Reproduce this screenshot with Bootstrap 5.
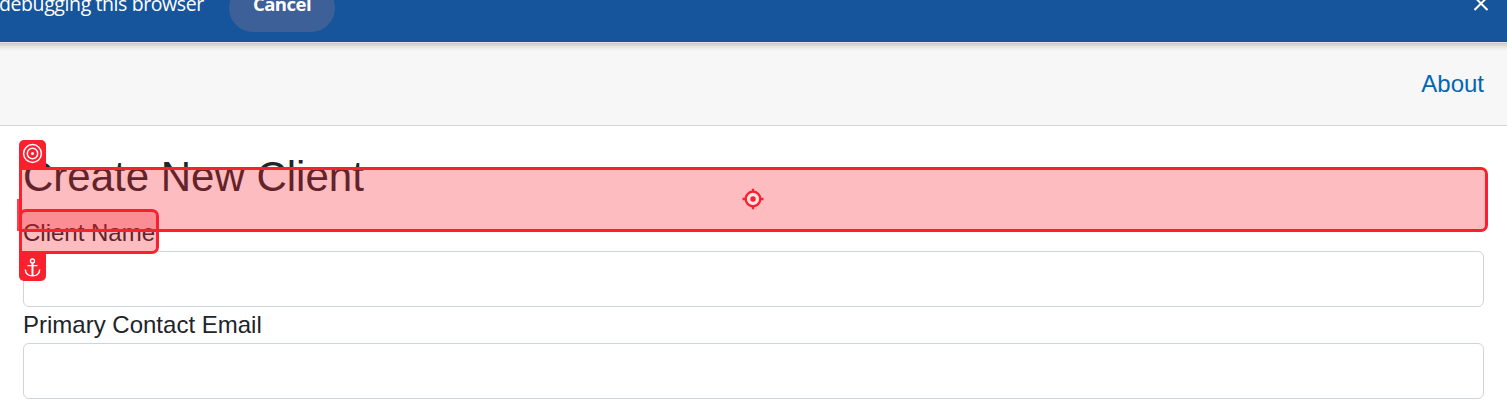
<!DOCTYPE html>
<html lang="en">
<head>
<meta charset="utf-8">
<meta name="viewport" content="width=device-width, initial-scale=1">
<title>Create New Client</title>
<link href="https://cdn.jsdelivr.net/npm/bootstrap@5.3.0/dist/css/bootstrap.min.css" rel="stylesheet">
<style>
html { font-size: 24px; }
body { font-family: "Liberation Sans", Arial, sans-serif; height: 401px; }
.infobar { height: 42px; background: #16559b; font: 19.5px/26px "Open Sans", "Noto Sans", sans-serif; }
.infobar-text { width: 230px; margin: -9px 0 0 -1px; letter-spacing: -.4px; white-space: nowrap; }
.infobar .btn-cancel { width: 106px; height: 48px; margin-top: -16px; padding: 0 0 8px; border: 0; border-radius: 24px; background: #3d6098; color: #fff; font: 700 18.5px/26px "Open Sans", sans-serif; letter-spacing: -.5px; }
.btn-dismiss { width: 14px; height: 14px; margin: -3px 19px 0 auto; }
.site-nav { height: 84px; background: linear-gradient(#e2e2e4 0 1px, #c5c8c9 1px, #d6d8d8 3px, #ececec 6px, #f7f7f7 9px); border-bottom: 1px solid #d2d4d6; padding: 0 23px; }
.site-nav .nav-link { color: #0366b3; line-height: 36px; }
.form-area { padding: 25.6px 23px 0; }
.form-area h3 { font-size: 42px; line-height: 50.4px; font-weight: 400; margin-bottom: 13px; }
.form-area label { display: block; line-height: 36px; width: max-content; }
.form-area .form-control { height: 56px; border-color: #ced4da; border-radius: 6px; }
/* selection overlays drawn above the form */
.overlay-box { border: 3px solid #fa202e; background: rgba(249,33,46,.3); }
.target-box { left: 19px; top: 167px; right: 19px; height: 65px; border-radius: 0 7px 7px 0; padding: 0 1px 1px 0; }
.anchor-box { left: 19px; top: 209px; width: 140px; height: 45px; border-radius: 7px 7px 7px 0; }
.overlay-tag { left: 19px; width: 27px; height: 28px; background: #fa202e; }
.overlay-tag svg { display: block; }
.link-line { left: 17px; top: 199px; width: 2px; height: 32px; background: #fa202e; opacity: .85; }
</style>
</head>
<body class="position-relative overflow-hidden bg-white">
<div class="infobar d-flex align-items-start text-white overflow-hidden">
  <div class="infobar-text">debugging this browser</div>
  <button class="btn btn-cancel" type="button">Cancel</button>
  <svg class="btn-dismiss" viewBox="0 0 14 14" stroke="#fff" stroke-width="2" fill="none"><path d="M.5 0L13.5 13M13.5 0L.5 13"/></svg>
</div>
<nav class="site-nav d-flex align-items-center justify-content-end"><a class="nav-link" href="#">About</a></nav>
<main class="form-area">
  <h3>Create New Client</h3>
  <label for="name">Client Name</label>
  <input class="form-control" id="name">
  <label for="email">Primary Contact Email</label>
  <input class="form-control" id="email">
</main>
<div class="overlay-box target-box position-absolute d-flex align-items-center justify-content-center">
  <svg width="22" height="22" viewBox="0 0 22 22" fill="none" stroke="#fa202e" stroke-width="2.3"><circle cx="11" cy="11" r="7.3" fill="#fee3e5"/><path d="M11 .8v3.5M11 17.7v3.5M.5 11h3.5M18 11h3.5"/><circle cx="11" cy="11" r="2.7" fill="#fa202e" stroke="none"/></svg>
</div>
<div class="overlay-box anchor-box position-absolute"></div>
<div class="link-line position-absolute"></div>
<div class="overlay-tag position-absolute" style="top:140px;border-radius:5px 5px 0 0">
  <svg width="27" height="28" viewBox="0 0 27 28" fill="none" stroke="#fff" stroke-width="1.5"><circle cx="13.5" cy="13.5" r="8.9"/><circle cx="13.5" cy="13.5" r="5.2"/><circle cx="13.5" cy="13.5" r="1.5" fill="#fff" stroke="none"/></svg>
</div>
<div class="overlay-tag position-absolute" style="top:253px;border-radius:0 0 5px 5px">
  <svg width="27" height="28" viewBox="0 0 27 28" fill="none" stroke="#fff" stroke-width="1.4"><circle cx="13.5" cy="8" r="2"/><path stroke-width="2" d="M13.5 10v13"/><path d="M8.5 12.6h10M6.3 16.500c.3 4 3.200 6.400 7.200 6.400s6.900-2.400 7.200-6.400"/></svg>
</div>
<script src="https://cdn.jsdelivr.net/npm/bootstrap@5.3.0/dist/js/bootstrap.bundle.min.js"></script>
</body>
</html>
